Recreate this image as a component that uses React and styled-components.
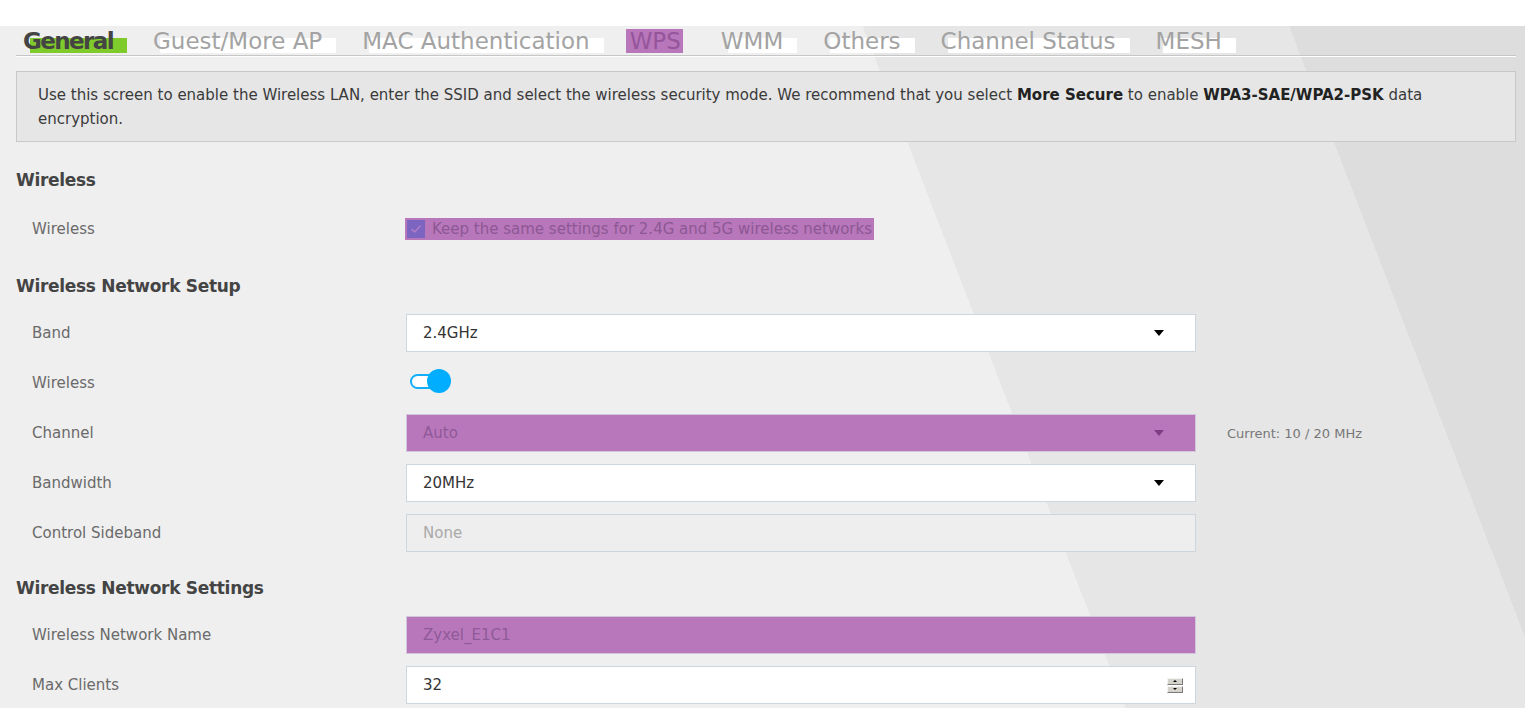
import React from "react";
import styled, { createGlobalStyle } from "styled-components";

const GlobalStyle = createGlobalStyle`
  html, body { margin: 0; padding: 0; height: 100%; overflow: hidden; }
  body { font-family: "DejaVu Sans", "Liberation Sans", sans-serif; background: #ffffff; }
  #root { height: 100%; }
`;

const Page = styled.div`
  height: 100vh;
  display: flex;
  flex-direction: column;
  overflow: hidden;
`;

const TopStrip = styled.div`
  height: 26px;
  flex: none;
  background: #ffffff;
`;

const Main = styled.div`
  flex: 1;
  padding: 0 9px 0 16px;
  background: linear-gradient(
    68.9deg,
    #efefef 1051px,
    #e6e6e6 1051px,
    #e6e6e6 1449px,
    #dddddd 1449px
  );
`;

const TabBar = styled.nav`
  display: flex;
  align-items: center;
  gap: 40px;
  height: 29px;
  padding-left: 7px;
  border-bottom: 1px solid #c6c6c6;
  box-shadow: 0 1px 0 #ffffff;
  isolation: isolate;
`;

const Tab = styled.span`
  position: relative;
  font-size: 23px;
  line-height: 27px;
  margin-top: 2px;
  white-space: nowrap;
  color: ${(p) => (p.$active ? "#444444" : p.$mark ? "#95559a" : "#a3a3a3")};
  font-weight: ${(p) => (p.$active ? 700 : 400)};
  letter-spacing: ${(p) => (p.$active ? "-1.6px" : "0")};
  &::before {
    content: "";
    position: absolute;
    z-index: -1;
    left: ${(p) => (p.$mark ? "-4px" : "7px")};
    right: ${(p) => (p.$mark ? "-2px" : "-14px")};
    top: ${(p) => (p.$mark ? "1px" : "10px")};
    bottom: 2px;
    background: ${(p) => (p.$active ? "#80cb2c" : p.$mark ? "#b877bb" : "#ffffff")};
  }
`;

const InfoBox = styled.div`
  margin: 15px 0 8px;
  border: 1px solid #c8c8c8;
  background: #e6e6e6;
  padding: 11px 22px 10px 21px;
  font-size: 15px;
  line-height: 24px;
  color: #3a3a3a;
  b { font-weight: 700; color: #222222; }
`;

const InfoText = styled.p`
  margin: 0;
  white-space: nowrap;
`;

const SectionTitle = styled.h2`
  margin: 0;
  height: 52px;
  padding-top: 19px;
  box-sizing: border-box;
  font-size: 17px;
  line-height: 22px;
  font-weight: 700;
  letter-spacing: -0.3px;
  color: #444444;
`;

const Row = styled.div`
  display: grid;
  grid-template-columns: 374px 790px auto;
  align-items: center;
  height: ${(p) => p.$h || 50}px;
  padding-left: 16px;
`;

const Label = styled.div`
  font-size: 15px;
  color: #6a6a6a;
  white-space: nowrap;
`;

const Field = styled.div`
  box-sizing: border-box;
  height: 38px;
  display: flex;
  align-items: center;
  justify-content: space-between;
  padding: 0 31px 0 16px;
  border: 1px solid ${(p) => (p.$mark ? "#d2c6dc" : "#cdd6de")};
  background: ${(p) =>
    p.$mark ? "#b977bb" : p.$disabled ? "#eeeeee" : "#ffffff"};
  font-size: 15px;
  color: ${(p) => (p.$mark ? "#8f5a98" : p.$disabled ? "#a9a9a9" : "#333333")};
`;

const Arrow = styled.span`
  width: 0;
  height: 0;
  border-left: 5px solid transparent;
  border-right: 5px solid transparent;
  border-top: 6px solid ${(p) => (p.$mark ? "#7c3f85" : "#000000")};
`;

const Hint = styled.div`
  margin-left: 31px;
  font-size: 13px;
  color: #777777;
  white-space: nowrap;
`;

const CheckWrap = styled.label`
  justify-self: start;
  display: inline-flex;
  align-items: center;
  gap: 7px;
  margin-left: -1px;
  padding: 2px;
  background: #b877bb;
  font-size: 15px;
  color: #8d5793;
  white-space: nowrap;
`;

const CheckBox = styled.span`
  width: 18px;
  height: 18px;
  background: #7c65c1;
  display: flex;
  align-items: center;
  justify-content: center;
`;

const Switch = styled.span`
  position: relative;
  width: 42px;
  height: 24px;
  margin-left: 3px;
  display: inline-block;
`;

const Track = styled.span`
  position: absolute;
  left: 1px;
  top: 5px;
  width: 34px;
  height: 15px;
  box-sizing: border-box;
  border: 2px solid #12aef8;
  border-radius: 8px;
  background: #ffffff;
`;

const Knob = styled.span`
  position: absolute;
  right: 0;
  top: 0;
  width: 24px;
  height: 24px;
  border-radius: 50%;
  background: #00adfe;
`;

const Spinner = styled.span`
  display: flex;
  flex-direction: column;
  gap: 1px;
  margin-right: -19px;
`;

const SpinBtn = styled.span`
  box-sizing: border-box;
  width: 16px;
  height: 7px;
  background: #d6d3cc;
  border-top: 1px solid #f4f4f4;
  border-left: 1px solid #f4f4f4;
  border-right: 1px solid #7a7a7a;
  border-bottom: 1px solid #7a7a7a;
  display: flex;
  align-items: center;
  justify-content: center;
  &::after {
    content: "";
    border-left: 2px solid transparent;
    border-right: 2px solid transparent;
    ${(p) =>
      p.$up
        ? "border-bottom: 2px solid #000;"
        : "border-top: 2px solid #000;"}
  }
`;

const tabs = [
  { t: "General", active: true },
  { t: "Guest/More AP" },
  { t: "MAC Authentication" },
  { t: "WPS", mark: true },
  { t: "WMM" },
  { t: "Others" },
  { t: "Channel Status" },
  { t: "MESH" },
];

export default function App() {
  return (
    <Page>
      <GlobalStyle />
      <TopStrip />
      <Main>
        <TabBar>
          {tabs.map((x) => (
            <Tab key={x.t} $active={x.active} $mark={x.mark}>
              {x.t}
            </Tab>
          ))}
        </TabBar>

        <InfoBox>
          <InfoText>
            Use this screen to enable the Wireless LAN, enter the SSID and select the
            wireless security mode. We recommend that you select <b>More Secure</b> to
            enable <b>WPA3-SAE/WPA2-PSK</b> data
            <br />
            encryption.
          </InfoText>
        </InfoBox>

        <SectionTitle>Wireless</SectionTitle>
        <Row $h={54}>
          <Label>Wireless</Label>
          <CheckWrap>
            <CheckBox>
              <svg width="12" height="10" viewBox="0 0 12 10">
                <path
                  d="M1.5 5.2 L4.6 8 L10.5 1.8"
                  fill="none"
                  stroke="#b27ac4"
                  strokeWidth="1.6"
                />
              </svg>
            </CheckBox>
            Keep the same settings for 2.4G and 5G wireless networks
          </CheckWrap>
        </Row>

        <SectionTitle>Wireless Network Setup</SectionTitle>
        <Row>
          <Label>Band</Label>
          <Field>
            2.4GHz
            <Arrow />
          </Field>
        </Row>
        <Row>
          <Label>Wireless</Label>
          <div>
            <Switch>
              <Track />
              <Knob />
            </Switch>
          </div>
        </Row>
        <Row>
          <Label>Channel</Label>
          <Field $mark>
            Auto
            <Arrow $mark />
          </Field>
          <Hint>Current: 10 / 20 MHz</Hint>
        </Row>
        <Row>
          <Label>Bandwidth</Label>
          <Field>
            20MHz
            <Arrow />
          </Field>
        </Row>
        <Row>
          <Label>Control Sideband</Label>
          <Field $disabled>None</Field>
        </Row>

        <SectionTitle>Wireless Network Settings</SectionTitle>
        <Row>
          <Label>Wireless Network Name</Label>
          <Field $mark>Zyxel_E1C1</Field>
        </Row>
        <Row>
          <Label>Max Clients</Label>
          <Field>
            32
            <Spinner>
              <SpinBtn $up />
              <SpinBtn />
            </Spinner>
          </Field>
        </Row>
      </Main>
    </Page>
  );
}
